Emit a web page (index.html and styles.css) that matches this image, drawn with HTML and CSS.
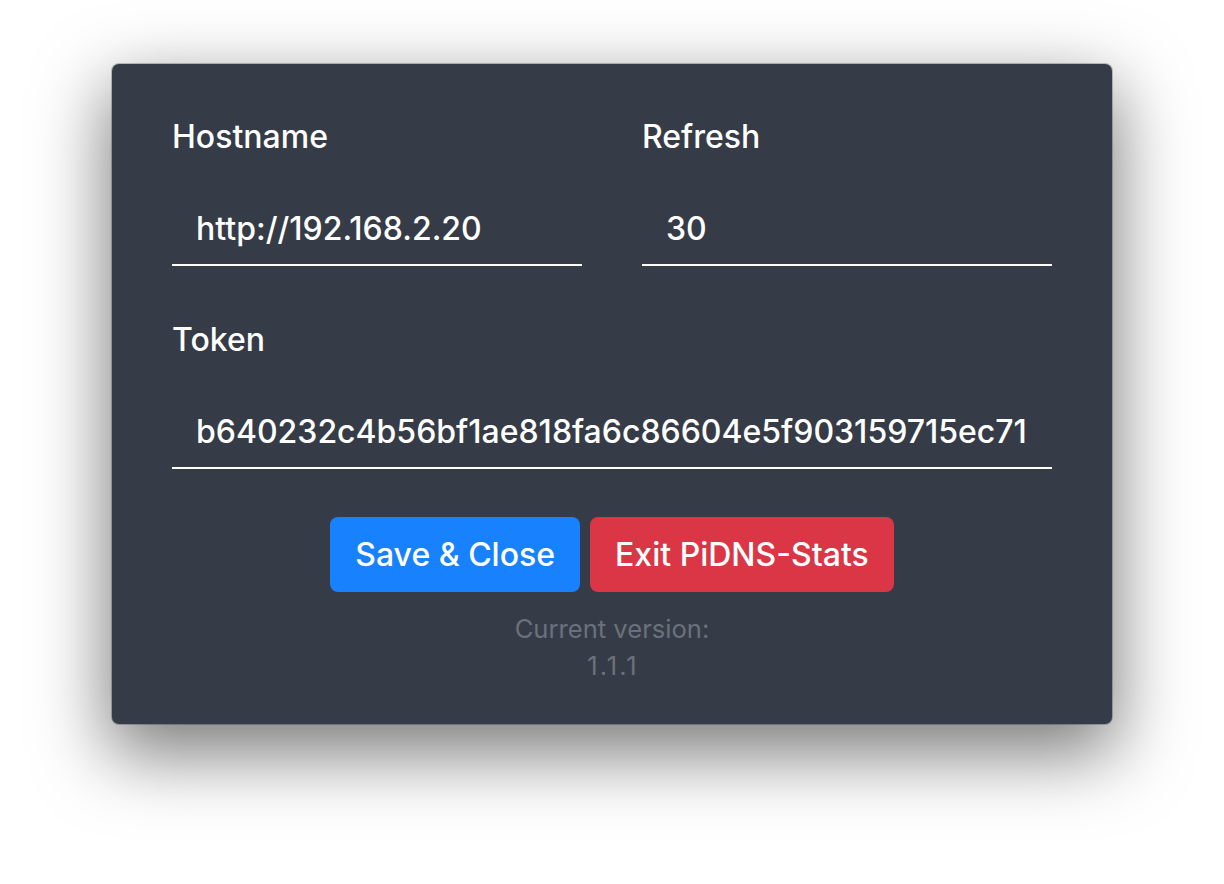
FILE: index.html
```html
<!DOCTYPE html>
<html lang="en">
<head>
<meta charset="utf-8">
<title>PiDNS-Stats Settings</title>
<link rel="stylesheet" href="styles.css">
</head>
<body>
  <div class="window">
    <form class="settings">
      <div class="row two">
        <div class="group">
          <label class="label">Hostname</label>
          <div class="input">http://192.168.2.20</div>
        </div>
        <div class="group">
          <label class="label">Refresh</label>
          <div class="input">30</div>
        </div>
      </div>
      <div class="row">
        <div class="group">
          <label class="label">Token</label>
          <div class="input">b640232c4b56bf1ae818fa6c86604e5f903159715ec71</div>
        </div>
      </div>
      <div class="actions">
        <button type="button" class="btn btn-primary">Save &amp; Close</button>
        <button type="button" class="btn btn-danger">Exit PiDNS-Stats</button>
      </div>
      <div class="version">
        <div>Current version:</div>
        <div class="num">1.1.1</div>
      </div>
    </form>
  </div>
</body>
</html>
```

FILE: styles.css
```css
html, body {
  margin: 0;
  padding: 0;
  background: #ffffff;
}

body {
  width: 1224px;
  height: 884px;
  overflow: hidden;
  font-family: Inter, "Liberation Sans", Arial, sans-serif;
  font-weight: 500;
}

.window {
  width: 1000px;
  height: 660px;
  margin: 64px auto 0;
  background: #363c47;
  border-radius: 7px;
  box-shadow: 0 26px 72px 4px rgba(0, 0, 0, 0.52), 0 0 0 1px rgba(0, 0, 0, 0.22);
  box-sizing: border-box;
  padding: 49px 60px 0;
}

.settings {
  display: flex;
  flex-direction: column;
}

.row {
  display: grid;
  grid-template-columns: 1fr;
  margin-bottom: 49px;
}

.row.two {
  grid-template-columns: 1fr 1fr;
  column-gap: 60px;
  margin-bottom: 50px;
}

.group {
  display: flex;
  flex-direction: column;
}

.label {
  color: #ffffff;
  font-size: 32px;
  line-height: 48px;
  margin-bottom: 32px;
}

.input {
  color: #ffffff;
  font-size: 32px;
  line-height: 48px;
  padding: 12px 24px 11px;
  border-bottom: 2px solid #ffffff;
  white-space: nowrap;
  overflow: hidden;
}

.actions {
  display: flex;
  justify-content: center;
  gap: 10px;
  margin-top: -1px;
}

.btn {
  font-family: inherit;
  font-weight: 500;
  font-size: 32px;
  line-height: 48px;
  color: #ffffff;
  border: none;
  border-radius: 8px;
  height: 75px;
  padding: 0 25px;
  cursor: pointer;
}

.btn-primary {
  background: #1882fe;
}

.btn-danger {
  background: #db3646;
}

.version {
  margin-top: 18px;
  text-align: center;
  color: #6b717c;
  font-size: 25.6px;
  font-weight: 400;
  line-height: 37px;
}

.version .num {
  letter-spacing: 2px;
  padding-left: 2px;
}
```
